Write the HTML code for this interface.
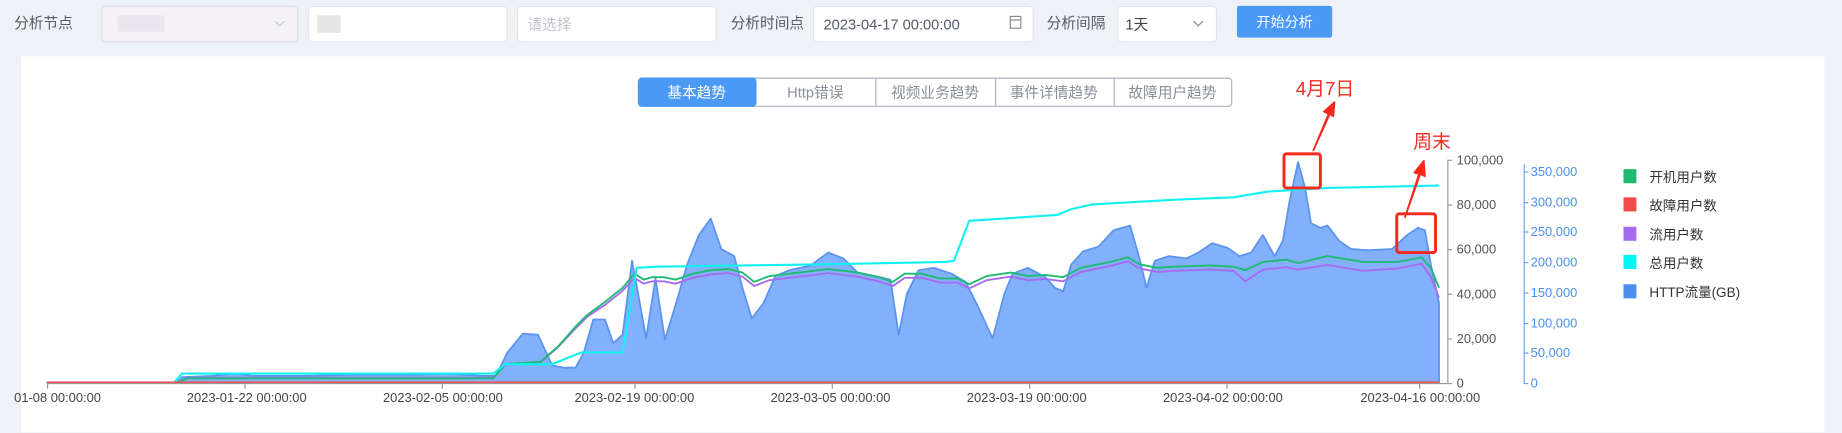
<!DOCTYPE html>
<html><head><meta charset="utf-8"><style>
html,body{margin:0;padding:0;background:#eef1f6;width:1842px;height:433px;overflow:hidden}
svg{display:block}
text{font-family:"Liberation Sans","Noto Sans CJK SC",sans-serif}
</style></head><body>
<svg width="1842" height="433" viewBox="0 0 1568 368.6" xmlns="http://www.w3.org/2000/svg">
<rect x="0" y="0" width="1568" height="369" fill="#eef1f6"/>
<!-- top controls -->
<g font-size="12.5" fill="#555b66">
<text x="12" y="24">分析节点</text>
<text x="622" y="24">分析时间点</text>
<text x="891" y="24">分析间隔</text>
</g>
<rect x="86.5" y="5.5" width="167" height="30" rx="3" fill="#f5f2f5" stroke="#e2e0e6"/>
<rect x="100" y="13" width="40" height="14" fill="#ebe6ee"/>
<path d="M234 18 l4 4 l4 -4" fill="none" stroke="#c0c4cc"/>
<rect x="262.5" y="5.5" width="169" height="30" rx="3" fill="#fff" stroke="#e2e4ea"/>
<rect x="270" y="13" width="20" height="15" fill="#e6e6e6"/>
<rect x="440.5" y="5.5" width="169" height="30" rx="3" fill="#fff" stroke="#e2e4ea"/>
<text x="449" y="25" font-size="12.5" fill="#c0c4cc">请选择</text>
<rect x="692.5" y="5.5" width="187" height="30" rx="3" fill="#fff" stroke="#e2e4ea"/>
<text x="701" y="25" font-size="12.5" fill="#555b66">2023-04-17 00:00:00</text>
<rect x="860" y="14" width="9" height="10" fill="none" stroke="#888" stroke-width="1"/>
<line x1="860" y1="17" x2="869" y2="17" stroke="#888"/>
<rect x="951.5" y="5.5" width="84" height="30" rx="3" fill="#fff" stroke="#e2e4ea"/>
<text x="958" y="25" font-size="12.5" fill="#444">1天</text>
<path d="M1016 18 l4 4 l4 -4" fill="none" stroke="#888"/>
<rect x="1053" y="5" width="81" height="27" rx="2" fill="#4a9af5"/>
<text x="1093.5" y="23" font-size="12" fill="#fff" text-anchor="middle">开始分析</text>
<!-- panel -->
<rect x="18" y="48" width="1535" height="320" fill="#fff"/>
<!-- tabs -->
<rect x="543.5" y="66.5" width="505" height="24" rx="3" fill="#fff" stroke="#aab2bd"/>
<rect x="543.5" y="66.5" width="100" height="24" rx="3" fill="#4a9af5" stroke="#4a9af5"/>
<g stroke="#aab2bd"><line x1="745.5" y1="67" x2="745.5" y2="90"/><line x1="847.5" y1="67" x2="847.5" y2="90"/><line x1="948.5" y1="67" x2="948.5" y2="90"/></g>
<g font-size="12.5" text-anchor="middle" fill="#8a8f99">
<text x="593" y="83" fill="#fff">基本趋势</text>
<text x="694" y="83">Http错误</text>
<text x="796" y="83">视频业务趋势</text>
<text x="897" y="83">事件详情趋势</text>
<text x="998" y="83">故障用户趋势</text>
</g>
<!-- area -->
<polygon fill="#82b0fa" stroke="#5a94ef" stroke-width="1.5" stroke-linejoin="round" points="40,326 150,326 155,321 180,320 200,318 215,320 260,320 300,319 350,319 380,318 410,320 422,320 432,300 445,284 458,285 470,311 480,313 490,313 497,300 505,272 515,272 522,292 530,285 538,222 545,260 550,288 558,237 566,289 575,260 585,225 595,200 605,186 614,212 625,218 632,245 640,271 650,258 660,235 672,230 690,226 705,215 718,220 730,232 745,235 758,238 765,285 772,250 782,230 795,228 810,233 822,240 832,260 845,288 855,250 862,233 875,228 890,236 898,245 905,248 912,225 922,214 935,210 948,196 962,192 970,220 976,245 983,222 995,218 1010,220 1020,215 1032,207 1045,211 1055,218 1065,215 1075,200 1085,218 1092,205 1098,170 1105,138 1111,160 1116,190 1124,194 1130,192 1140,205 1150,212 1165,213 1185,212 1198,200 1207,194 1213,196 1218,225 1225,258 1225,326"/>
<polyline fill="none" stroke="#a66cf0" stroke-width="1.6" stroke-linejoin="round" transform="translate(0,3.5)" points="40,322 150,322 160,318 420,318 430,307 460,305 475,292 490,276 500,266 515,256 530,244 540,233 548,238 555,236 565,236 575,238 590,233 605,230 620,229 632,232 642,240 655,235 680,232 705,229 730,232 748,236 760,240 770,233 785,233 800,237 815,237 825,242 840,235 860,232 875,235 890,234 905,236 920,228 945,223 960,219 970,225 985,228 1000,227 1030,226 1050,227 1060,236 1075,226 1095,224 1105,226 1130,222 1160,227 1190,225 1210,221 1218,232 1225,250"/>
<polyline fill="none" stroke="#1fbb73" stroke-width="1.6" stroke-linejoin="round" points="40,326 150,326 160,322 420,322 430,310 460,308 475,295 490,278 500,268 515,257 530,245 540,233 548,238 555,236 565,236 575,238 590,233 605,230 620,229 632,232 642,240 655,235 680,232 705,229 730,232 748,236 760,240 770,233 785,233 800,237 815,237 825,242 840,235 860,232 875,235 890,234 905,236 920,228 945,223 960,219 970,225 985,228 1000,227 1030,226 1050,227 1060,230 1075,223 1095,221 1105,224 1130,218 1160,223 1190,223 1210,219 1218,228 1225,245"/>
<polyline fill="none" stroke="#12f0f2" stroke-width="1.8" stroke-linejoin="round" points="40,326 148,326 155,318 420,318 430,310 470,310 495,300 520,300 530,300 542,228 560,227 700,225 805,223 812,222 825,188 900,183 912,178 930,174 1000,170 1050,168 1080,163 1130,160 1225,158"/>
<line x1="40" y1="325.5" x2="1225" y2="325.5" stroke="#f05050" stroke-width="1.5"/>
<!-- axes -->
<g stroke="#999" fill="none">
<line x1="40" y1="326.5" x2="1232" y2="326.5"/>
<line x1="1232.5" y1="136" x2="1232.5" y2="327"/>
<path d="M40.5 326v5 M208.5 326v5 M376.5 326v5 M540.5 326v5 M708.5 326v5 M876.5 326v5 M1044.5 326v5 M1208.5 326v5"/>
<path d="M1232 136.5h4 M1232 174.5h4 M1232 212.5h4 M1232 250.5h4 M1232 288.5h4 M1232 326.5h4"/>
</g>
<g stroke="#6aa4f2" fill="none">
<line x1="1297.5" y1="140" x2="1297.5" y2="327"/>
<path d="M1297 146.5h4 M1297 172.5h4 M1297 197.5h4 M1297 223.5h4 M1297 249.5h4 M1297 275.5h4 M1297 300.5h4 M1297 326.5h4"/>
</g>
<g font-size="11" fill="#555">
<text x="1240" y="140">100,000</text><text x="1240" y="178">80,000</text><text x="1240" y="216">60,000</text><text x="1240" y="254">40,000</text><text x="1240" y="292">20,000</text><text x="1240" y="330">0</text>
</g>
<g font-size="11" fill="#4a8ff0">
<text x="1303" y="150">350,000</text><text x="1303" y="176">300,000</text><text x="1303" y="201">250,000</text><text x="1303" y="227">200,000</text><text x="1303" y="253">150,000</text><text x="1303" y="279">100,000</text><text x="1303" y="304">50,000</text><text x="1303" y="330">0</text>
</g>
<g font-size="11" fill="#444" text-anchor="middle">
<text x="49" y="342">01-08 00:00:00</text>
<text x="210" y="342">2023-01-22 00:00:00</text>
<text x="377" y="342">2023-02-05 00:00:00</text>
<text x="540" y="342">2023-02-19 00:00:00</text>
<text x="707" y="342">2023-03-05 00:00:00</text>
<text x="874" y="342">2023-03-19 00:00:00</text>
<text x="1041" y="342">2023-04-02 00:00:00</text>
<text x="1209" y="342">2023-04-16 00:00:00</text>
</g>
<!-- legend -->
<rect x="1382" y="144" width="11" height="12" fill="#1fbb73"/>
<rect x="1382" y="168" width="11" height="12" fill="#f24d4d"/>
<rect x="1382" y="193" width="11" height="12" fill="#a66cf0"/>
<rect x="1382" y="217" width="11" height="12" fill="#00f5f5"/>
<rect x="1382" y="242" width="11" height="12" fill="#4a8ff0"/>
<g font-size="11.5" fill="#333">
<text x="1404" y="155">开机用户数</text><text x="1404" y="179">故障用户数</text><text x="1404" y="204">流用户数</text><text x="1404" y="228">总用户数</text><text x="1404" y="253">HTTP流量(GB)</text>
</g>
<!-- annotations -->
<text x="1103" y="81" font-size="16" fill="#f52a1c">4月7日</text>
<text x="1203" y="126" font-size="16" fill="#f52a1c">周末</text>
<path d="M1118 128 L1131 97 L1127 95 L1136 87 L1135 99 L1132 97 Z" fill="#f52a1c" stroke="#f52a1c" stroke-width="1.5" stroke-linejoin="round"/>
<path d="M1196 185 L1208 148 L1204 147 L1212 137 L1213 150 L1209 148 Z" fill="#f52a1c" stroke="#f52a1c" stroke-width="1.5" stroke-linejoin="round"/>
<rect x="1093" y="131" width="31" height="29" rx="2" fill="none" stroke="#f52a1c" stroke-width="2.5"/>
<rect x="1189" y="182" width="33" height="33" rx="2" fill="none" stroke="#f52a1c" stroke-width="2.5"/>
</svg>
</body></html>
